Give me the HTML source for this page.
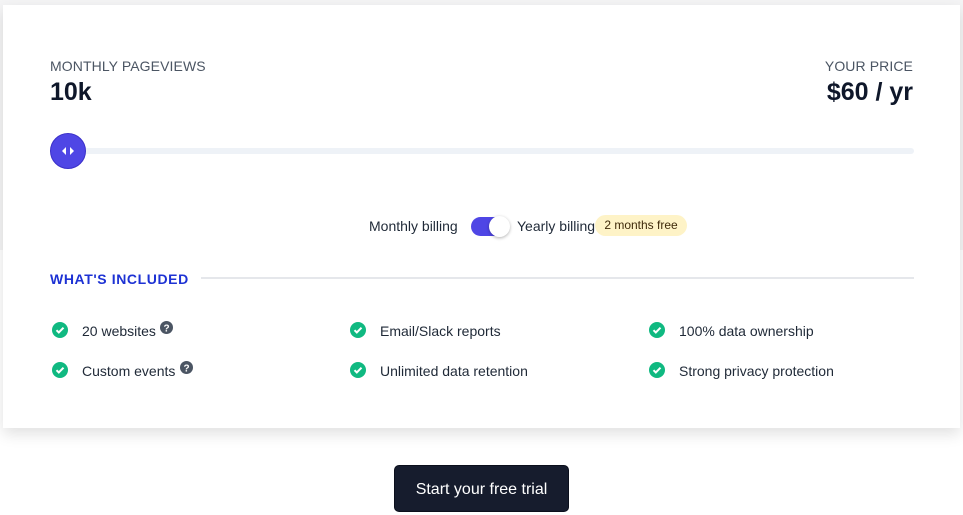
<!DOCTYPE html>
<html><head><meta charset="utf-8"><style>
*{margin:0;padding:0;box-sizing:border-box}
body{width:963px;height:515px;background:#fff;font-family:"Liberation Sans",sans-serif;position:relative;overflow:hidden}
.top{position:absolute;left:0;top:0;width:963px;height:250px;background:#f4f4f5}
.card{position:absolute;left:3px;top:5px;width:957px;height:423px;background:#fff;box-shadow:0 6px 14px rgba(0,0,0,.12)}
.abs{position:absolute}
.lbl{font-size:14px;color:#4b5563;letter-spacing:.1px}
.big{font-size:25px;font-weight:bold;color:#0f172a}
.track{left:47px;top:143px;width:864px;height:6px;border-radius:3px;background:#eef2f7}
.thumb{left:47px;top:128px;width:36px;height:36px;border-radius:50%;background:#4f46e5;border:1px solid #3b30c9}
.t{font-size:14px;color:#1f2937}
.chk{width:16px;height:16px}
</style></head><body>
<div class="top"></div>
<div class="card">
<div class="abs lbl" style="left:47px;top:53px">MONTHLY PAGEVIEWS</div>
<div class="abs big" style="left:47px;top:73px">10k</div>
<div class="abs lbl" style="right:47px;top:53px">YOUR PRICE</div>
<div class="abs big" style="right:47px;top:73px">$60 / yr</div>
<div class="abs track"></div>
<div class="abs thumb"><svg width="36" height="36" style="position:absolute;left:-1px;top:-1px"><path d="M16 14v8l-4-4z M20 14v8l4-4z" fill="#fff"/></svg></div>
<div class="abs t" style="left:366px;top:213px">Monthly billing</div>
<div class="abs" style="left:468px;top:212px;width:38px;height:19px;border-radius:10px;background:#4f46e5"></div>
<div class="abs" style="left:486px;top:211px;width:21px;height:21px;border-radius:50%;background:#fff;box-shadow:0 1px 3px rgba(0,0,0,.3)"></div>
<div class="abs t" style="left:514px;top:213px">Yearly billing</div>
<div class="abs" style="left:592px;top:210px;width:92px;height:21px;border-radius:11px;background:#fef3c7;font-size:12px;color:#3f2a0a;text-align:center;line-height:21px">2 months free</div>
<div class="abs" style="left:47px;top:266px;font-size:14px;font-weight:bold;color:#1d32d4;letter-spacing:.6px">WHAT'S INCLUDED</div>
<div class="abs" style="left:198px;top:272px;width:713px;height:2px;background:#e5e7eb"></div>
</div>
<svg width="0" height="0" style="position:absolute"><defs><g id="c"><circle cx="8" cy="8" r="8" fill="#10b981"/><path d="M4.5 8.2l2.3 2.3 4.7-4.8" stroke="#fff" stroke-width="2" fill="none"/></g><g id="q"><circle cx="6.5" cy="6.5" r="6.5" fill="#4b5563"/><text x="6.5" y="10.5" font-size="10" font-weight="bold" fill="#fff" text-anchor="middle" font-family="Liberation Sans">?</text></g></defs></svg>
<svg class="abs chk" style="left:52px;top:322px"><use href="#c"/></svg>
<div class="abs t" style="left:82px;top:323px">20 websites</div>
<svg class="abs" width="13" height="13" style="left:160px;top:321px"><use href="#q"/></svg>
<svg class="abs chk" style="left:52px;top:362px"><use href="#c"/></svg>
<div class="abs t" style="left:82px;top:363px">Custom events</div>
<svg class="abs" width="13" height="13" style="left:180px;top:361px"><use href="#q"/></svg>
<svg class="abs chk" style="left:350px;top:322px"><use href="#c"/></svg>
<div class="abs t" style="left:380px;top:323px">Email/Slack reports</div>
<svg class="abs chk" style="left:350px;top:362px"><use href="#c"/></svg>
<div class="abs t" style="left:380px;top:363px">Unlimited data retention</div>
<svg class="abs chk" style="left:649px;top:322px"><use href="#c"/></svg>
<div class="abs t" style="left:679px;top:323px">100% data ownership</div>
<svg class="abs chk" style="left:649px;top:362px"><use href="#c"/></svg>
<div class="abs t" style="left:679px;top:363px">Strong privacy protection</div>
<div class="abs" style="left:394px;top:465px;width:175px;height:47px;border-radius:5px;background:#161c2d;border:1px solid #0b0f1c;color:#fff;font-size:16px;text-align:center;line-height:47px">Start your free trial</div>
</body></html>
